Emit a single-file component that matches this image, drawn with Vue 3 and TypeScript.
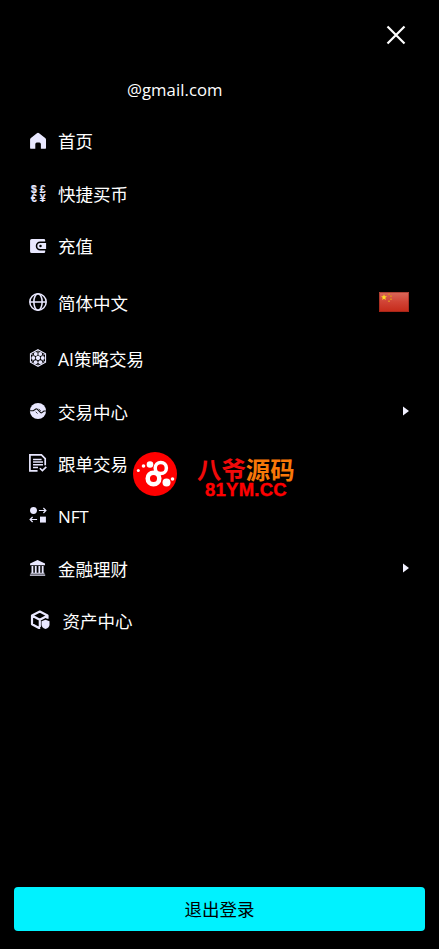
<script setup lang="ts">
interface MenuItem {
  icon: string
  label: string
  kind?: 'arrow' | 'flag' | 'asset'
  latin?: boolean
}

const items: MenuItem[] = [
  { icon: 'home', label: '首页' },
  { icon: 'currency', label: '快捷买币' },
  { icon: 'wallet', label: '充值' },
  { icon: 'globe', label: '简体中文', kind: 'flag' },
  { icon: 'hex', label: 'AI策略交易' },
  { icon: 'trade', label: '交易中心', kind: 'arrow' },
  { icon: 'document', label: '跟单交易' },
  { icon: 'nft', label: 'NFT', latin: true },
  { icon: 'bank', label: '金融理财', kind: 'arrow' },
  { icon: 'asset', label: '资产中心', kind: 'asset' },
]
</script>

<template>
  <main class="drawer">
    <header class="top">
      <button class="close" aria-label="关闭">
        <svg width="20" height="20" viewBox="0 0 20 20"><path d="M1.500 1.500 18.500 18.500M18.500 1.500 1.500 18.500" fill="none" stroke="#fff" stroke-width="2.200" /></svg>
      </button>
    </header>
    <div class="account">@gmail.com</div>
    <nav class="menu">
      <a v-for="item in items" :key="item.icon" class="row" :class="item.kind">
        <svg class="icon" :class="item.icon" viewBox="0 0 20 20">
          <path v-if="item.icon === 'home'" d="M11.200 1.300 18 6.600q.9.700.9 1.800v9q0 1.300-1.300 1.300h-4.400v-5.200q0-1.700-1.700-1.700H8.700q-1.700 0-1.700 1.700v5.200H2.500q-1.300 0-1.300-1.300v-9q0-1.100.9-1.800l6.700-5.300q1.200-.9 2.400 0z" fill="currentColor" />
          <g v-else-if="item.icon === 'currency'" class="money">
            <text x="5.300" y="8.800">$</text><text x="15.200" y="8.800">£</text>
            <text x="5.300" y="19.400">€</text><text x="15.200" y="19.400">¥</text>
          </g>
          <g v-else-if="item.icon === 'wallet'">
            <path d="M3 2.200h13.500q1.500 0 1.500 1.500V5h-5.500a5 5 0 0 0 0 10H18v1.300q0 1.500-1.500 1.500H3q-1.800 0-1.800-1.800V4Q1.200 2.200 3 2.200z" fill="currentColor" />
            <path d="M12.600 6.600H19v6.800h-6.400a3.400 3.400 0 0 1 0-6.800z" fill="currentColor" />
            <circle cx="12.800" cy="10" r="1.400" fill="#000" />
          </g>
          <g v-else-if="item.icon === 'globe'" fill="none" stroke="currentColor" stroke-width="1.700">
            <circle cx="10" cy="10" r="9.100" /><ellipse cx="10" cy="10" rx="4.600" ry="9.100" /><path d="M1 10h18" />
          </g>
          <g v-else-if="item.icon === 'hex'">
            <path d="m10 .8 8.400 4.600v9.200L10 19.200l-8.400-4.600V5.400z" fill="none" stroke="currentColor" stroke-width="1.200" />
            <path d="M10 1v3M2 5.500l3 1.700M18 5.500l-3 1.700M2 14.500l3-2M18 14.500l-3-2M10 19v-2" fill="none" stroke="currentColor" stroke-width=".8" />
            <g fill="currentColor"><circle cx="10" cy="10" r="2.400" /><circle cx="7.500" cy="5.500" r="2.200" /><circle cx="12.500" cy="5.500" r="2.200" /><circle cx="15.200" cy="10" r="2.200" /><circle cx="12.600" cy="14.600" r="2.200" /><circle cx="7.400" cy="14.600" r="2.200" /><circle cx="4.800" cy="10" r="2.200" /></g>
          </g>
          <g v-else-if="item.icon === 'trade'">
            <circle cx="10" cy="10" r="9" fill="currentColor" />
            <path d="M1 9.700h3.800l2.800-1.900q.8-.5 1.500.2l3.800 3.800q.7.600 1.400 0l2.300-1.800H19" fill="none" stroke="#111" stroke-width="1.300" />
            <path d="m7.400 10.900 2.100 1.900M10.800 7.800l2.300 2" fill="none" stroke="#111" stroke-width=".9" />
          </g>
          <g v-else-if="item.icon === 'document'" fill="none" stroke="currentColor">
            <path d="M9.500 18.700H1V1h12.800l4.200 4.200v7.300" stroke-width="1.900" />
            <path d="M4.500 6h9.500M4.500 9h11M4.500 12h11M4.500 15h5.500" stroke-width="1.700" />
            <path d="m12 15.800 2.900 2.700 4.300-4.200" stroke-width="1.800" />
          </g>
          <g v-else-if="item.icon === 'nft'">
            <circle cx="5" cy="5" r="3.800" fill="currentColor" /><path d="M12.200 11.800h6.600v6.600h-6.600z" fill="currentColor" />
            <path d="M11 5h7.600M16 2.200 18.800 5 16 7.800M9 15H1.400M4 12.200 1.200 15 4 17.800" fill="none" stroke="currentColor" stroke-width="1.300" />
          </g>
          <path v-else-if="item.icon === 'bank'" d="M9.500 1 17.800 5v2H1.200V5zM2.800 7.800h2v8.200h-2zM6.500 7.800h2v8.200h-2zM10.500 7.800h2v8.200h-2zM14.200 7.800h2v8.200h-2zM1.800 15.200h15.400v1.200H1.800zM1 17.200h17v1.300H1z" fill="currentColor" />
          <g v-else>
            <path d="M10.200 18H9L2 14.200V5.500L9.800 1.600l7.700 3.900v3.300M2.200 5.700l7.600 4 7.600-4M9.800 9.700V17" fill="none" stroke="currentColor" stroke-width="2.200" stroke-linejoin="round" />
            <path d="m15.500 9.700 4 1.500v3.500q0 2.700-4 4.400-4-1.700-4-4.400v-3.500z" fill="currentColor" />
          </g>
        </svg>
        <span class="label" :class="{ latin: item.latin }">{{ item.label }}</span>
        <svg v-if="item.kind === 'arrow'" class="caret" width="6" height="10" viewBox="0 0 6 10"><path d="M0 .5 6 5 0 9.500z" fill="#f2f1ff" /></svg>
        <svg v-if="item.kind === 'flag'" class="flag-image" width="30" height="20" viewBox="0 0 30 20">
          <defs><linearGradient id="red" x1="0" y1="0" x2="0" y2="1"><stop offset="0" stop-color="#d9695b" /><stop offset=".48" stop-color="#d14436" /><stop offset="1" stop-color="#c52a19" /></linearGradient></defs>
          <path d="M0 0h30v20H0z" fill="url(#red)" /><path d="M.5.5h29v19H.5z" fill="none" stroke="#8d2318" stroke-opacity=".55" />
          <path d="m5 2.200.8 2 2.100.1-1.600 1.400.5 2.200L5 6.700 3.200 7.900l.5-2.200-1.600-1.400 2.100-.1z" fill="#ffdc24" />
          <path d="M9 1.500h2v1.500H9zM11 3.500h2V5h-2zM11 6.500h2V8h-2zM9 8.500h2V10H9z" fill="#dd8522" />
        </svg>
      </a>
    </nav>
    <button class="logout">退出登录</button>
    <aside class="watermark">
      <svg width="44" height="44" viewBox="0 0 44 44">
        <circle cx="22" cy="22" r="22" fill="#f00" />
        <g fill="none" stroke="#fff"><circle cx="27.800" cy="16" r="5.600" stroke-width="3.500" /><circle cx="20.500" cy="26.500" r="5.800" stroke-width="4.500" /></g>
        <g fill="#fff"><circle cx="17" cy="12.500" r="3.300" /><circle cx="10.500" cy="14" r="1.800" /><circle cx="5.300" cy="18.500" r="1.500" /><circle cx="33.500" cy="30.500" r="4" /><circle cx="39.500" cy="27" r="1.800" /></g>
      </svg>
      <div class="brand"><strong>八爷<em>源码</em></strong><b>81YM.CC</b></div>
    </aside>
  </main>
</template>

<style>
body { background: #000; }
</style>

<style scoped>
.drawer { box-sizing: border-box; width: 100%; height: 949px; padding: 0 14px 18px; display: flex; flex-direction: column; position: relative; overflow: hidden; background: #000; color: #fff; font: 17.5px/24px "Open Sans", "Noto Sans CJK SC", sans-serif; }
.top { display: flex; justify-content: flex-end; height: 70px; padding: 25px 19.500px 0 0; box-sizing: border-box; }
button { border: 0; padding: 0; font: inherit; }
.close { width: 20px; height: 20px; background: none; }
.close svg, .icon, .flag-image, .caret { display: block; flex: none; }
.account { height: 45px; padding-left: 113px; line-height: 40px; font-size: 16.700px; letter-spacing: .05px; }
.menu { display: flex; flex-direction: column; }
.row { display: flex; align-items: center; height: 52.350px; padding: 0 16px 0 15px; color: #e9e8ff; }
.row.flag { height: 61px; }
.icon { width: 18px; height: 18px; margin-right: 11px; margin-bottom: 2px; }
.icon.home, .icon.currency, .icon.wallet { margin-bottom: 0; }
.label { color: #fff; white-space: nowrap; }
.label.latin { font-size: 17px; letter-spacing: -.1px; padding-top: 2px; }
.flag-image, .caret { margin: 0 0 2px auto; }
.arrow { padding-right: 16.500px; }
.row.asset { padding-left: 16px; }
.asset .icon { width: 20px; height: 20px; margin-right: 12.500px; }
.money { fill: currentColor; stroke: currentColor; stroke-width: .25px; font: 700 11.500px "Liberation Sans", sans-serif; text-anchor: middle; }
.logout { height: 44px; margin-top: auto; border-radius: 4px; background: #00f2ff; color: #000; }
.watermark { position: absolute; left: 133px; top: 452px; display: flex; gap: 20px; }
.brand { display: flex; flex-direction: column; padding-top: 4px; color: #f00; }
.brand strong { font: 700 24.400px/25px "Noto Sans CJK SC", sans-serif; color: #f00a0a; }
.brand em { font-style: normal; color: #f97808; }
.brand b { font: 700 18.500px/16px "Liberation Sans", sans-serif; letter-spacing: .25px; margin: 1px 0 0 8px; -webkit-text-stroke: .4px #f00; }
</style>
